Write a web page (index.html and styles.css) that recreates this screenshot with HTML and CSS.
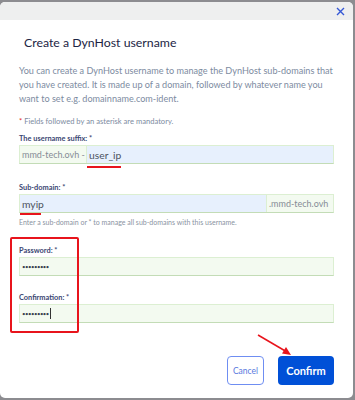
FILE: index.html
```html
<!DOCTYPE html>
<html>
<head>
<meta charset="utf-8">
<link rel="stylesheet" href="styles.css">
</head>
<body>
<div class="modal">
  <div class="header">
    <svg class="close" width="9" height="9" viewBox="0 0 9 9"><path d="M1 1L8 8M8 1L1 8" stroke="#3457d5" stroke-width="1.4" fill="none"/></svg>
  </div>
  <div class="content">
    <h1 class="title">Create a DynHost username</h1>
    <p class="desc">You can create a DynHost username to manage the DynHost sub-domains that you have created. It is made up of a domain, followed by whatever name you want to set e.g. domainname.com-ident.</p>
    <p class="mandatory"><span class="req">*</span> Fields followed by an asterisk are mandatory.</p>

    <div class="label label-first">The username suffix: *</div>
    <div class="group">
      <div class="addon addon-left">mmd-tech.ovh -</div>
      <div class="field field-blue">user_ip</div>
    </div>

    <div class="label label-gap">Sub-domain: *</div>
    <div class="group">
      <div class="field field-blue">myip</div>
      <div class="addon addon-right">.mmd-tech.ovh</div>
    </div>
    <div class="help">Enter a sub-domain or * to manage all sub-domains with this username.</div>

    <div class="label label-pass">Password: *</div>
    <div class="group">
      <div class="field field-green dots">•••••••••</div>
    </div>

    <div class="label label-conf">Confirmation: *</div>
    <div class="group">
      <div class="field field-green dots">•••••••••<span class="caret"></span></div>
    </div>

    <div class="actions">
      <button class="btn btn-cancel">Cancel</button>
      <button class="btn btn-confirm">Confirm</button>
    </div>
  </div>

  <div class="mark mark-underline1"></div>
  <div class="mark mark-underline2"></div>
  <div class="mark mark-box"></div>
  <svg class="mark arrow" width="40" height="26" viewBox="0 0 40 26">
    <line x1="2" y1="2" x2="31" y2="19" stroke="#e8141c" stroke-width="1.5"/>
    <path d="M35 22L26 20.5L30 14Z" fill="#e8141c"/>
  </svg>
</div>
</body>
</html>
```

FILE: styles.css
```css
html, body {
  margin: 0;
  padding: 0;
}
body {
  background: #8c8c90;
  width: 355px;
  height: 400px;
  overflow: hidden;
  font-family: Lato, "Open Sans", sans-serif;
}
.modal {
  position: relative;
  margin-top: 2px;
  width: 353px;
  height: 396px;
  background: #ffffff;
  border-radius: 5px;
  overflow: hidden;
}
.header {
  height: 18px;
  background: #eeefef;
  display: flex;
  justify-content: flex-end;
  align-items: center;
  padding-right: 8px;
}
.close {
  display: block;
}
.content {
  padding: 0 19px;
}
.title {
  margin: 14px 0 0 5px;
  font-size: 12.3px;
  line-height: 18px;
  font-weight: 400;
  color: #1b2444;
}
.desc {
  margin: 12px 0 0 0;
  font-size: 9.1px;
  line-height: 14px;
  color: #7d8b9f;
}
.mandatory {
  margin: 10px 0 0 0;
  font-size: 7.6px;
  line-height: 10px;
  color: #7d8b9f;
}
.req {
  color: #e2312b;
}
.label {
  font-size: 7.4px;
  line-height: 10px;
  font-weight: 700;
  color: #3a4672;
  margin-bottom: 1px;
}
.label-first { margin-top: 8px; }
.label-gap { margin-top: 19px; }
.label-pass { margin-top: 19px; }
.label-conf { margin-top: 17px; }
.group {
  display: flex;
  height: 19px;
  border: 1px solid #dcefd2;
  border-bottom-color: #c3dcb6;
  box-sizing: border-box;
}
.addon {
  display: flex;
  align-items: center;
  background: #f3faf0;
  color: #868c96;
  font-size: 9px;
  padding: 0 1px 0 2px;
  white-space: nowrap;
  overflow: hidden;
}
.addon-left {
  width: 67px;
  box-sizing: border-box;
  border-right: 1px solid #dcefd2;
}
.addon-right {
  width: 67px;
  box-sizing: border-box;
  border-left: 1px solid #dcefd2;
}
.field {
  flex: 1;
  display: flex;
  align-items: center;
  padding: 0 2px;
  font-size: 10.3px;
  color: #4d5260;
}
.field-blue {
  background: #e7f0fd;
}
.field-green {
  background: #f3faf0;
}
.dots {
  font-size: 6px;
  letter-spacing: -0.5px;
  color: #3a3f4d;
}
.caret {
  display: inline-block;
  width: 1px;
  height: 11px;
  background: #333;
  margin-left: 1px;
}
.help {
  margin-top: 4px;
  font-size: 7px;
  line-height: 10px;
  color: #8a93a2;
}
.actions {
  display: flex;
  justify-content: flex-end;
  gap: 14px;
  margin-top: 33px;
}
.btn {
  height: 29px;
  border-radius: 4px;
  font-family: Lato, "Open Sans", sans-serif;
  padding: 0;
}
.btn-cancel {
  width: 37px;
  background: #ffffff;
  border: 1px solid #6f8ef2;
  color: #5a78de;
  font-size: 8.5px;
}
.btn-confirm {
  width: 56px;
  background: #0050d7;
  border: none;
  color: #ffffff;
  font-size: 11px;
  font-weight: 700;
}
.mark {
  position: absolute;
}
.mark-underline1 {
  left: 87px;
  top: 164px;
  width: 34px;
  height: 2px;
  background: #e8141c;
}
.mark-underline2 {
  left: 20px;
  top: 211px;
  width: 21px;
  height: 2px;
  background: #e8141c;
}
.mark-box {
  left: 10px;
  top: 235px;
  width: 65px;
  height: 92px;
  border: 2px solid #e8141c;
  border-radius: 2px;
}
.arrow {
  left: 256px;
  top: 331px;
}
```
